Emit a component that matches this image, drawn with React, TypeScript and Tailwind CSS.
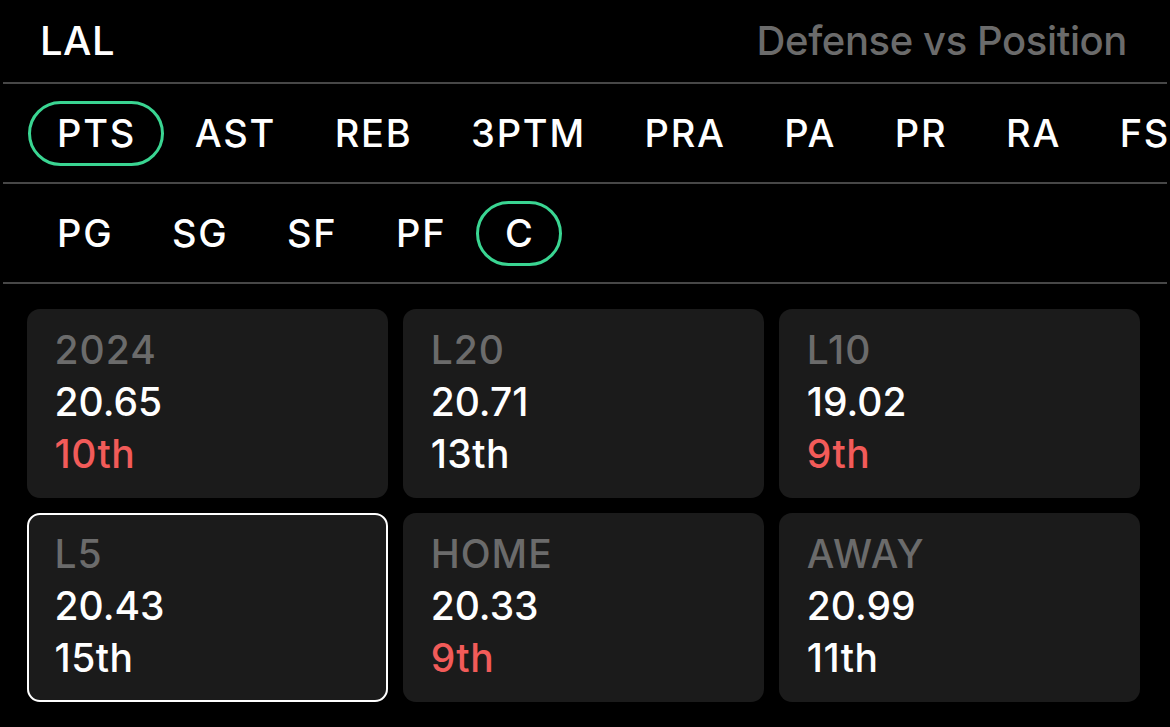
import React, { useState } from 'react';

interface StatCard {
  label: string;
  value: string;
  rank: string;
  hot: boolean;
}

const stats = ['PTS', 'AST', 'REB', '3PTM', 'PRA', 'PA', 'PR', 'RA', 'FS'];
const positions = ['PG', 'SG', 'SF', 'PF', 'C'];

const cards: StatCard[] = [
  { label: '2024', value: '20.65', rank: '10th', hot: true },
  { label: 'L20', value: '20.71', rank: '13th', hot: false },
  { label: 'L10', value: '19.02', rank: '9th', hot: true },
  { label: 'L5', value: '20.43', rank: '15th', hot: false },
  { label: 'HOME', value: '20.33', rank: '9th', hot: true },
  { label: 'AWAY', value: '20.99', rank: '11th', hot: false },
];

const Tab: React.FC<{ text: string; active: boolean; onClick: () => void }> = ({ text, active, onClick }) => (
  <button
    onClick={onClick}
    className={
      active
        ? 'shrink-0 h-[65px] pl-[26px] pr-[24.5px] rounded-full border-[3.5px] border-[#3ad592] text-white whitespace-nowrap'
        : 'shrink-0 h-[65px] pl-[26px] pr-[24.5px] rounded-full border-[3.5px] border-transparent text-white whitespace-nowrap'
    }
  >
    {text}
  </button>
);

const App: React.FC = () => {
  const [stat, setStat] = useState('PTS');
  const [pos, setPos] = useState('C');
  const [selected, setSelected] = useState('L5');

  return (
    <div
      className="w-[1170px] h-[727px] overflow-hidden bg-black text-white font-medium"
      style={{ fontFamily: 'Inter, "Noto Sans", sans-serif' }}
    >
      {/* Cabecera */}
      <div className="h-[82px] flex items-center justify-between pl-[40px] pr-[43px] text-[40px] leading-none pb-[1px]">
        <span className="tracking-[0.5px]">LAL</span>
        <span className="text-[#6b6b6b] tracking-[-0.4px]">Defense vs Position</span>
      </div>
      <div className="mx-[3px] h-[2px] bg-[#474747]" />

      {/* Estadísticas */}
      <div className="h-[98px] flex items-center gap-[2px] pl-[28px] text-[38px] tracking-[1.8px] leading-none overflow-hidden">
        {stats.map((s) => (
          <Tab key={s} text={s} active={stat === s} onClick={() => setStat(s)} />
        ))}
      </div>
      <div className="mx-[3px] h-[2px] bg-[#474747]" />

      {/* Posiciones */}
      <div className="h-[98px] flex items-center gap-[2px] pl-[28px] text-[38px] tracking-[1.8px] leading-none">
        {positions.map((p) => (
          <Tab key={p} text={p} active={pos === p} onClick={() => setPos(p)} />
        ))}
      </div>
      <div className="mx-[3px] h-[2px] bg-[#474747]" />

      {/* Tarjetas */}
      <div className="grid grid-cols-3 gap-x-[15.5px] gap-y-[15px] pl-[27px] pr-[30px] pt-[25px]">
        {cards.map((c) => (
          <div
            key={c.label}
            onClick={() => setSelected(c.label)}
            className={
              selected === c.label
                ? 'h-[189px] rounded-[13px] bg-[#1b1b1b] border-[2.5px] border-white pl-[25.5px] pt-[13px] text-[39px] leading-[52px]'
                : 'h-[189px] rounded-[13px] bg-[#1b1b1b] border-[2.5px] border-transparent pl-[25.5px] pt-[13px] text-[39px] leading-[52px]'
            }
          >
            <div className="text-[#6b6b6b] tracking-[1px]">{c.label}</div>
            <div className="text-white">{c.value}</div>
            <div className={c.hot ? 'text-[#f25b59] tracking-[0.5px]' : 'text-white tracking-[0.5px]'}>{c.rank}</div>
          </div>
        ))}
      </div>
    </div>
  );
};

export default App;
